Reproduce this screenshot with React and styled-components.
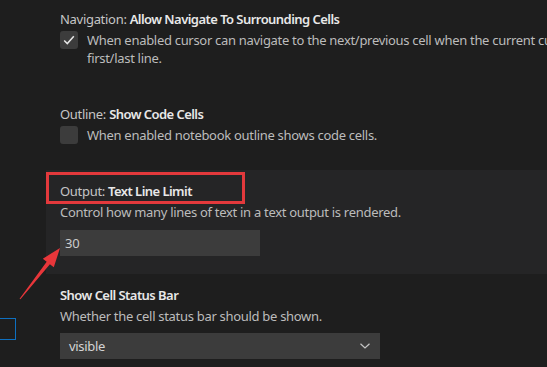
import React from 'react'
import styled, { createGlobalStyle } from 'styled-components'

const GlobalStyle = createGlobalStyle`
  html, body {
    margin: 0;
    padding: 0;
    background: #1e1e1e;
    overflow: hidden;
  }
`

const Page = styled.div`
  position: relative;
  display: flex;
  width: 547px;
  height: 367px;
  overflow: hidden;
  background: #1e1e1e;
  font-family: "Segoe UI", "Noto Sans", sans-serif;
  font-size: 13px;
  letter-spacing: -0.3px;
`

const Toc = styled.div`
  flex: 0 0 46px;
  padding-top: 318px;
  box-sizing: border-box;
`

const TocItem = styled.div`
  margin-left: -10px;
  width: 26px;
  height: 22px;
  box-sizing: border-box;
  border: 1px solid #0e70c0;
`

const List = styled.div`
  flex: 0 0 695px;
  margin-top: -2px;
`

const Row = styled.div`
  padding: 12px 14px ${p => (p.$bool ? 26 : 18)}px;
  background: ${p => (p.$focused ? '#252526' : 'transparent')};
`

const Title = styled.div`
  line-height: 18px;
  color: #c6c6c6;
  white-space: nowrap;
`

const Label = styled.span`
  font-weight: 600;
  letter-spacing: -0.55px;
  color: #e8e8e8;
`

const Description = styled.div`
  margin-top: 3px;
  line-height: 18px;
  color: #bcbcbc;
`

const BoolLine = styled.div`
  display: flex;
  align-items: flex-start;
  gap: 9px;
  margin-top: 3px;
  line-height: 18px;
  color: #bcbcbc;
`

const Checkbox = styled.div`
  flex: 0 0 18px;
  height: 18px;
  border-radius: 3px;
  background: #3c3c3c;
  display: flex;
  align-items: center;
  justify-content: center;
`

const TextInput = styled.input`
  display: block;
  margin-top: 9px;
  width: 200px;
  height: 26px;
  box-sizing: border-box;
  padding: 0 5px;
  border: none;
  outline: none;
  background: #3c3c3c;
  color: #cccccc;
  font: inherit;
  letter-spacing: inherit;
`

const Select = styled.div`
  margin-top: 8px;
  width: 320px;
  height: 26px;
  box-sizing: border-box;
  padding: 0 10px 0 9px;
  display: flex;
  align-items: center;
  justify-content: space-between;
  background: #3c3c3c;
  color: #d4d4d4;
`

const Highlight = styled.div`
  position: absolute;
  left: 46px;
  top: 172px;
  width: 199px;
  height: 32px;
  box-sizing: border-box;
  border: 3px solid #e3393c;
  pointer-events: none;
`

const ArrowLayer = styled.svg`
  position: absolute;
  left: 0;
  top: 0;
  pointer-events: none;
`

const Check = () => (
  <svg width="14" height="14" viewBox="0 0 14 14">
    <path d="M2.2 7.4 L5.3 10.6 L11.8 3.2" fill="none" stroke="#e6e6e6" strokeWidth="1.5" />
  </svg>
)

const Chevron = () => (
  <svg width="10" height="6" viewBox="0 0 10 6">
    <path d="M0.5 0.7 L5 5 L9.5 0.7" fill="none" stroke="#c5c5c5" strokeWidth="1.2" />
  </svg>
)

const BoolSetting = ({ category, label, checked, children }) => (
  <Row $bool>
    <Title>{category}: <Label>{label}</Label></Title>
    <BoolLine>
      <Checkbox>{checked && <Check />}</Checkbox>
      <span>{children}</span>
    </BoolLine>
  </Row>
)

const App = () => (
  <Page>
    <GlobalStyle />
    <Toc>
      <TocItem />
    </Toc>
    <List>
      <BoolSetting category="Navigation" label="Allow Navigate To Surrounding Cells" checked>
        When enabled cursor can navigate to the next/previous cell when the current cursor in the cell editor is at the first/last line.
      </BoolSetting>
      <BoolSetting category="Outline" label="Show Code Cells">
        When enabled notebook outline shows code cells.
      </BoolSetting>
      <Row $focused>
        <Title>Output: <Label>Text Line Limit</Label></Title>
        <Description>Control how many lines of text in a text output is rendered.</Description>
        <TextInput defaultValue="30" />
      </Row>
      <Row>
        <Title><Label>Show Cell Status Bar</Label></Title>
        <Description>Whether the cell status bar should be shown.</Description>
        <Select>
          <span>visible</span>
          <Chevron />
        </Select>
      </Row>
    </List>
    <Highlight />
    <ArrowLayer width="547" height="367">
      <polygon
        points="60,248 53.8,267.3 49.9,264.2 20.4,299.3 19.6,298.7 46.7,261.8 42.8,258.7"
        fill="#e8363a"
      />
    </ArrowLayer>
  </Page>
)

export default App
